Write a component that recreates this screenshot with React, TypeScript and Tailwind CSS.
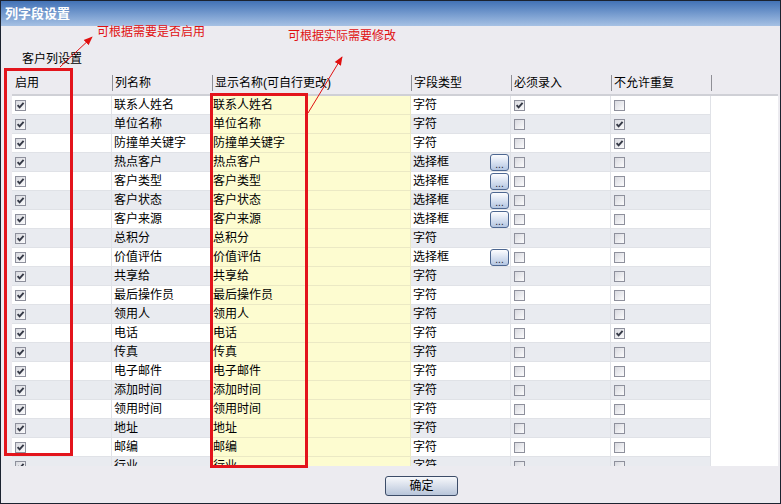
import React from "react";

type Row = { name: string; kind: "字符" | "选择框"; must: boolean; unique: boolean };

const rows: Row[] = [
  { name: "联系人姓名", kind: "字符", must: true, unique: false },
  { name: "单位名称", kind: "字符", must: false, unique: true },
  { name: "防撞单关键字", kind: "字符", must: false, unique: true },
  { name: "热点客户", kind: "选择框", must: false, unique: false },
  { name: "客户类型", kind: "选择框", must: false, unique: false },
  { name: "客户状态", kind: "选择框", must: false, unique: false },
  { name: "客户来源", kind: "选择框", must: false, unique: false },
  { name: "总积分", kind: "字符", must: false, unique: false },
  { name: "价值评估", kind: "选择框", must: false, unique: false },
  { name: "共享给", kind: "字符", must: false, unique: false },
  { name: "最后操作员", kind: "字符", must: false, unique: false },
  { name: "领用人", kind: "字符", must: false, unique: false },
  { name: "电话", kind: "字符", must: false, unique: true },
  { name: "传真", kind: "字符", must: false, unique: false },
  { name: "电子邮件", kind: "字符", must: false, unique: false },
  { name: "添加时间", kind: "字符", must: false, unique: false },
  { name: "领用时间", kind: "字符", must: false, unique: false },
  { name: "地址", kind: "字符", must: false, unique: false },
  { name: "邮编", kind: "字符", must: false, unique: false },
  { name: "行业", kind: "字符", must: false, unique: false },
];

const cols = "grid grid-cols-[100px_100px_199px_100px_100px_100px_1fr]";

// classic XP-style little checkbox
function Check({ on }: { on: boolean }) {
  return (
    <span className="relative block h-[11px] w-[11px] border border-[#8e909c] bg-linear-to-br from-[#d9dae0] to-[#fbfbfc]">
      {on && (
        <svg viewBox="0 0 9 9" className="absolute left-0 top-0 h-[9px] w-[9px]">
          <path d="M1.6 4.2 L3.6 6.4 L7.6 1.8" fill="none" stroke="#353946" strokeWidth="1.9" />
        </svg>
      )}
    </span>
  );
}

function HeadCell({ label, first = false }: { label: string; first?: boolean }) {
  return (
    <div className="flex h-full items-center">
      {!first && <span className="h-[16px] w-px bg-[#8f8f96]" />}
      <span className={first ? "pl-[3px]" : "pl-[2px]"}>{label}</span>
    </div>
  );
}

export default function App() {
  return (
    <div className="relative flex h-[504px] w-[781px] flex-col overflow-hidden border border-[#1b2230] bg-[#ecebf0] font-['Liberation_Sans','Noto_Sans_CJK_SC',sans-serif] text-[12px] leading-[16px] text-black">
      {/* title bar */}
      <div className="flex h-[25px] shrink-0 items-center bg-linear-to-b from-[#4272b6] to-[#a6c1e4] pl-[4px] text-[13px] font-bold text-white">
        列字段设置
      </div>

      <div className="flex h-[46px] shrink-0 items-end pb-[5px] pl-[21px]">客户列设置</div>

      {/* grid */}
      <div className="ml-[11px] flex h-[394px] w-[766px] shrink-0 flex-col overflow-hidden">
        <div className={`${cols} h-[24px] shrink-0 border-b-2 border-[#cfd0d6]`}>
          <HeadCell label="启用" first />
          <HeadCell label="列名称" />
          <HeadCell label="显示名称(可自行更改)" />
          <HeadCell label="字段类型" />
          <HeadCell label="必须录入" />
          <HeadCell label="不允许重复" />
          <HeadCell label="" />
        </div>
        <div className="flex-1 overflow-hidden bg-white">
          {rows.map((r, i) => {
            const band = i % 2 === 1 ? "bg-[#e9ebf0]" : "bg-white";
            const cell = `h-[19px] border-b border-r border-[#e0e2e7] ${band}`;
            return (
              <div key={r.name} className={`${cols} leading-[19px]`}>
                <div className={`${cell} flex items-center pl-[3px]`}>
                  <Check on />
                </div>
                <div className={`${cell} pl-[2px]`}>{r.name}</div>
                <div className="h-[19px] border-b border-r border-[#ebe9c4] bg-[#fdfcd0] pl-[1px]">{r.name}</div>
                <div className={`${cell} flex items-center justify-between pl-[2px] pr-[1px]`}>
                  <span>{r.kind}</span>
                  {r.kind === "选择框" && (
                    <span className="flex h-[17px] w-[19px] items-end justify-center rounded-[3px] border border-[#4d6791] bg-linear-to-b from-[#fdfdff] to-[#b4c6e2] text-[10px] leading-[11px] text-[#1d2230]">
                      ...
                    </span>
                  )}
                </div>
                <div className={`${cell} flex items-center pl-[3px]`}>
                  <Check on={r.must} />
                </div>
                <div className={`${cell} flex items-center pl-[3px]`}>
                  <Check on={r.unique} />
                </div>
                <div className="h-[19px] bg-white" />
              </div>
            );
          })}
        </div>
      </div>

      {/* footer */}
      <div className="flex-1">
        <button
          type="button"
          className="ml-[384px] mt-[10px] h-[20px] w-[73px] rounded-[3px] border border-[#3c4c68] bg-linear-to-b from-[#f7f8fb] to-[#b8c5da] text-[12px] leading-[16px] text-black"
        >
          确定
        </button>
      </div>

      {/* annotations drawn over the page */}
      <span className="absolute left-[96px] top-[23px] text-[#e01010]">可根据需要是否启用</span>
      <span className="absolute left-[287px] top-[27px] text-[#e01010]">可根据实际需要修改</span>
      <div className="pointer-events-none absolute left-[3px] top-[67px] h-[388px] w-[69px] border-[3px] border-[#e3141c]" />
      <div className="pointer-events-none absolute left-[209px] top-[92px] h-[375px] w-[98px] border-[3px] border-[#e3141c]" />
      <svg className="pointer-events-none absolute left-0 top-0" width="779" height="502" viewBox="0 0 779 502">
        <defs>
          <marker id="ah" viewBox="0 0 10 10" refX="9" refY="5" markerWidth="9" markerHeight="9" orient="auto" markerUnits="userSpaceOnUse">
            <path d="M0 1 L10 5 L0 9 Z" fill="#e01010" />
          </marker>
        </defs>
        <line x1="59" y1="66" x2="91" y2="36" stroke="#e01010" strokeWidth="1" markerEnd="url(#ah)" />
        <line x1="307" y1="112" x2="341" y2="56" stroke="#e01010" strokeWidth="1" markerEnd="url(#ah)" />
      </svg>
    </div>
  );
}
